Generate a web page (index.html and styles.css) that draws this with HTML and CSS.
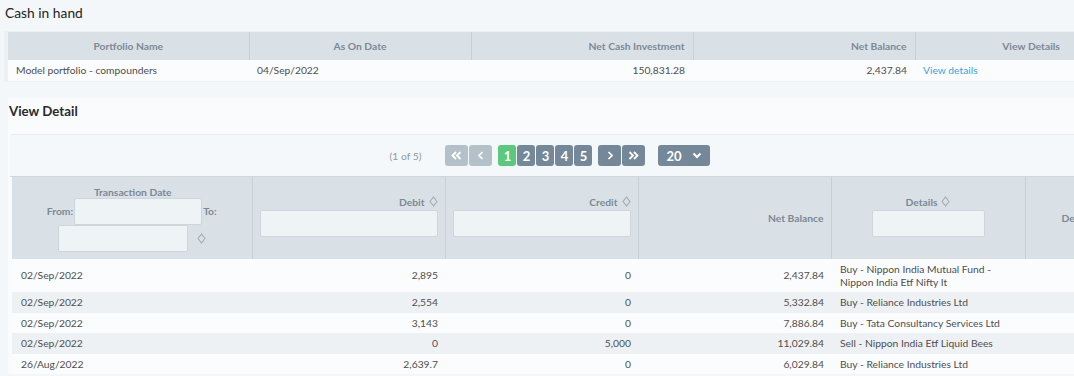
FILE: index.html
```html
<!DOCTYPE html>
<html lang="en">
<head>
    <meta charset="UTF-8">
    <meta name="viewport" content="width=device-width, initial-scale=1.0">
    <title>Cash in hand</title>
    <link rel="stylesheet" href="styles.css">
</head>
<body>
    <h3 class="page-title">Cash in hand</h3>
    <div class="cash-panel">
        <table class="grid cash-grid">
            <thead>
                <tr>
                    <th class="c-name">Portfolio Name</th>
                    <th class="c-date">As On Date</th>
                    <th class="c-num num">Net Cash Investment</th>
                    <th class="c-num num">Net Balance</th>
                    <th class="c-view">View Details</th>
                </tr>
            </thead>
            <tbody>
                <tr>
                    <td>Model portfolio - compounders</td>
                    <td>04/Sep/2022</td>
                    <td class="num">150,831.28</td>
                    <td class="num">2,437.84</td>
                    <td><a class="link" href="#">View details</a></td>
                </tr>
            </tbody>
        </table>
    </div>

    <div class="detail-panel">
        <h4 class="detail-title">View Detail</h4>
        <div class="detail-box">
            <div class="pager">
                <span class="pager-info">(1 of 5)</span>
                <div class="pager-group">
                    <span class="pbtn wide off"><svg width="11" height="9" viewBox="0 0 11 9"><path d="M5 1 L1.5 4.5 L5 8 M9.5 1 L6 4.5 L9.5 8" fill="none" stroke="#fff" stroke-width="1.8"/></svg></span>
                    <span class="pbtn wide off"><svg width="6" height="9" viewBox="0 0 6 9"><path d="M4.5 1 L1 4.5 L4.5 8" fill="none" stroke="#fff" stroke-width="1.6"/></svg></span>
                </div>
                <div class="pager-group pages">
                    <span class="pbtn on">1</span>
                    <span class="pbtn">2</span>
                    <span class="pbtn">3</span>
                    <span class="pbtn">4</span>
                    <span class="pbtn">5</span>
                </div>
                <div class="pager-group">
                    <span class="pbtn wide"><svg width="6" height="9" viewBox="0 0 6 9"><path d="M1.5 1 L5 4.5 L1.5 8" fill="none" stroke="#fff" stroke-width="1.6"/></svg></span>
                    <span class="pbtn wide"><svg width="11" height="9" viewBox="0 0 11 9"><path d="M1.5 1 L5 4.5 L1.5 8 M6 1 L9.5 4.5 L6 8" fill="none" stroke="#fff" stroke-width="1.8"/></svg></span>
                </div>
                <div class="rows-select">
                    <span>20</span>
                    <svg width="10" height="7" viewBox="0 0 10 7"><path d="M1.5 1.5 L5 5 L8.5 1.5" fill="none" stroke="#fff" stroke-width="2"/></svg>
                </div>
            </div>

            <table class="grid tx-grid">
                <thead>
                    <tr>
                        <th class="t-date">
                            <div class="th-label">Transaction Date</div>
                            <div class="range">
                                <span>From:</span><input class="filter from-input" type="text"><span>To:</span>
                            </div>
                            <div class="range">
                                <input class="filter to-input" type="text">
                                <svg class="sort" width="9" height="11" viewBox="0 0 9 11"><path d="M4.5 1 L8 5.5 L4.5 10 L1 5.5 Z" fill="none" stroke="#a3adb6" stroke-width="1.2" stroke-linejoin="round"/></svg>
                            </div>
                        </th>
                        <th class="t-num num">
                            <div class="th-label">Debit <svg class="sort" width="9" height="11" viewBox="0 0 9 11"><path d="M4.5 1 L8 5.5 L4.5 10 L1 5.5 Z" fill="none" stroke="#a3adb6" stroke-width="1.2" stroke-linejoin="round"/></svg></div>
                            <input class="filter wide-input" type="text">
                        </th>
                        <th class="t-num num">
                            <div class="th-label">Credit <svg class="sort" width="9" height="11" viewBox="0 0 9 11"><path d="M4.5 1 L8 5.5 L4.5 10 L1 5.5 Z" fill="none" stroke="#a3adb6" stroke-width="1.2" stroke-linejoin="round"/></svg></div>
                            <input class="filter wide-input" type="text">
                        </th>
                        <th class="t-num num">Net Balance</th>
                        <th class="t-det">
                            <div class="th-label">Details <svg class="sort" width="9" height="11" viewBox="0 0 9 11"><path d="M4.5 1 L8 5.5 L4.5 10 L1 5.5 Z" fill="none" stroke="#a3adb6" stroke-width="1.2" stroke-linejoin="round"/></svg></div>
                            <input class="filter short-input" type="text">
                        </th>
                        <th class="t-last">Description</th>
                    </tr>
                </thead>
                <tbody>
                    <tr>
                        <td>02/Sep/2022</td>
                        <td class="num">2,895</td>
                        <td class="num">0</td>
                        <td class="num">2,437.84</td>
                        <td>Buy - Nippon India Mutual Fund - Nippon India Etf Nifty It</td>
                        <td></td>
                    </tr>
                    <tr>
                        <td>02/Sep/2022</td>
                        <td class="num">2,554</td>
                        <td class="num">0</td>
                        <td class="num">5,332.84</td>
                        <td>Buy - Reliance Industries Ltd</td>
                        <td></td>
                    </tr>
                    <tr>
                        <td>02/Sep/2022</td>
                        <td class="num">3,143</td>
                        <td class="num">0</td>
                        <td class="num">7,886.84</td>
                        <td>Buy - Tata Consultancy Services Ltd</td>
                        <td></td>
                    </tr>
                    <tr>
                        <td>02/Sep/2022</td>
                        <td class="num">0</td>
                        <td class="num">5,000</td>
                        <td class="num">11,029.84</td>
                        <td>Sell - Nippon India Etf Liquid Bees</td>
                        <td></td>
                    </tr>
                    <tr>
                        <td>26/Aug/2022</td>
                        <td class="num">2,639.7</td>
                        <td class="num">0</td>
                        <td class="num">6,029.84</td>
                        <td>Buy - Reliance Industries Ltd</td>
                        <td></td>
                    </tr>
                </tbody>
            </table>
        </div>
    </div>
</body>
</html>
```

FILE: styles.css
```css
body {
    margin: 0;
    width: 1220px;
    height: 376px;
    overflow: hidden;
    background-color: #f4f7f9;
    font-family: Lato, "Open Sans", sans-serif;
    font-size: 10.3px;
    color: #4e4e4e;
}
.page-title {
    margin: 0;
    padding: 4px 0 0 5px;
    height: 27px;
    font-size: 13.8px;
    font-weight: normal;
    color: #222;
}
.cash-panel {
    margin-left: 4px;
    padding: 1px 0 1px 4px;
    background: #edf1f4;
}
.grid {
    border-collapse: collapse;
    table-layout: fixed;
}
.grid th,
.grid td {
    box-sizing: border-box;
}
.grid th {
    background: #dae1e6;
    color: #7a8996;
    font-weight: bold;
    border-right: 1px solid #c8d0d7;
    padding: 0 8px;
    text-align: center;
}
.grid td {
    padding: 4px 8px;
    line-height: 13px;
    white-space: nowrap;
}
.grid .num {
    text-align: right;
}
.cash-grid {
    width: 1139px;
}
.cash-grid th {
    height: 28px;
}
.cash-grid td {
    background: #fbfcfd;
}
.c-name { width: 241px; }
.c-date { width: 222px; }
.c-num { width: 222px; }
.c-view { width: 232px; }
.link {
    color: #3aa3dc;
    text-decoration: none;
}
.detail-panel {
    margin: 16px 0 0 8px;
    width: 1082px;
    background: #f9fbfc;
    padding-top: 3px;
}
.detail-title {
    margin: 0;
    padding-left: 1px;
    height: 33px;
    line-height: 21px;
    font-size: 13.3px;
    color: #2a2a2a;
}
.detail-box {
    margin-left: 2px;
}
.pager {
    display: flex;
    align-items: center;
    justify-content: center;
    height: 41px;
    background: #f5f8fa;
    border-top: 1px solid #e8edf0;
    border-bottom: 1px solid #cfd7dd;
}
.pager-info {
    color: #8d99a4;
    margin-right: 24px;
}
.pager-group {
    display: flex;
    gap: 1px;
    margin-right: 6px;
}
.pbtn {
    display: flex;
    align-items: center;
    justify-content: center;
    width: 18px;
    height: 21px;
    border-radius: 3px;
    background: #75889a;
    color: #fff;
    font-weight: bold;
    font-size: 13px;
}
.pbtn.wide {
    width: 23px;
}
.pbtn.off {
    background: #b5c1c8;
}
.pbtn.on {
    background: #5cc87e;
}
.rows-select {
    display: flex;
    align-items: center;
    justify-content: space-between;
    box-sizing: border-box;
    width: 52px;
    height: 21px;
    margin-left: 7px;
    padding: 0 8px;
    border-radius: 3px;
    background: #75889a;
    color: #fff;
    font-weight: bold;
    font-size: 13px;
}
.tx-grid {
    margin-left: 2px;
    width: 1208px;
}
.tx-grid th {
    height: 82px;
    padding: 0 7px;
}
.tx-grid td {
    padding: 4px 7px 4px 9px;
    white-space: normal;
    line-height: 12.5px;
}
.tx-grid td.num {
    padding: 4px 7px;
}
.tx-grid tbody tr:nth-child(odd) td {
    background: #fbfcfd;
}
.tx-grid tbody tr:nth-child(even) td {
    background: #eef1f4;
}
.t-date { width: 240px; }
.t-num { width: 193px; }
.t-det { width: 194px; }
.tx-grid .t-last {
    width: 195px;
    text-align: left;
    padding-left: 36px;
}
.th-label {
    display: flex;
    align-items: center;
    gap: 4px;
    height: 14px;
}
.t-num .th-label { justify-content: flex-end; }
.t-det .th-label { justify-content: center; }
.range {
    display: flex;
    align-items: center;
    justify-content: center;
    gap: 1px;
}
.filter {
    box-sizing: border-box;
    height: 27px;
    background: #eef3f6;
    border: 1px solid #cdd6dd;
    border-radius: 2px;
    margin: 0;
}
.from-input { width: 128px; }
.to-input { width: 130px; margin-right: 8px; }
.wide-input { width: 178px; margin: 1px 0 5px; }
.short-input { width: 113px; margin: 1px 0 5px; }
.t-date .th-label {
    justify-content: center;
    height: 12px;
    margin-top: 1px;
    padding-left: 2px;
}
.sort {
    display: block;
}
```
